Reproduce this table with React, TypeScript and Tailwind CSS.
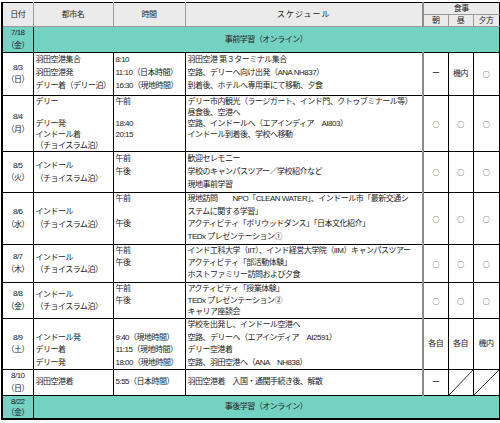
import React from 'react';

type Row = {
  date: string[];
  h: string;
  lh: string;
  city: string[];
  cityCenter?: boolean;
  time: string[];
  timeCenter?: boolean;
  sched: string[];
  schedCenter?: boolean;
  meals: string[];
};

const rows: Row[] = [
  {
    date: ['8/3', '（日）'], h: 'h-[43px]', lh: 'h-[13px] leading-[13px]',
    city: ['羽田空港集合', '羽田空港発', 'デリー着（デリー泊）'],
    time: ['8:10', '11:10（日本時間）', '16:30（現地時間）'],
    sched: ['羽田空港 第３ターミナル集合', '空路、デリーへ向け出発（ANA NH837）', '到着後、ホテルへ専用車にて移動、夕食'],
    meals: ['ー', '機内', '○'],
  },
  {
    date: ['8/4', '（月）'], h: 'h-[55px]', lh: 'h-[11px] leading-[11px]',
    city: ['デリー', '', 'デリー発', 'インドール着', '（チョイスラム泊）'],
    time: ['午前', '', '18:40', '20:15'],
    sched: ['デリー市内観光（ラージガート、インド門、クトゥブミナール等）', '昼食後、空港へ', '空路、インドールへ（エアインディア　AI803）', 'インドール到着後、学校へ移動'],
    meals: ['○', '○', '○'],
  },
  {
    date: ['8/5', '（火）'], h: 'h-[41px]', lh: 'h-[13px] leading-[13px]',
    city: ['インドール', '（チョイスラム泊）'], cityCenter: true,
    time: ['午前', '午後'],
    sched: ['歓迎セレモニー', '学校のキャンパスツアー／学校紹介など', '現地事前学習'],
    meals: ['○', '○', '○'],
  },
  {
    date: ['8/6', '（水）'], h: 'h-[52px]', lh: 'h-[12.5px] leading-[12.5px]',
    city: ['インドール', '（チョイスラム泊）'], cityCenter: true,
    time: ['午前', '', '午後'],
    sched: ['現地訪問　　NPO「CLEAN WATER」、インドール市「最新交通シ', 'ステムに関する学習」', 'アクティビティ「ボリウッドダンス」「日本文化紹介」', 'TEDx プレゼンテーション①'],
    meals: ['○', '○', '○'],
  },
  {
    date: ['8/7', '（木）'], h: 'h-[38px]', lh: 'h-[12px] leading-[12px]',
    city: ['インドール', '（チョイスラム泊）'], cityCenter: true,
    time: ['午前', '午後'],
    sched: ['インド工科大学（IIT）、インド経営大学院（IIM）キャンパスツアー', 'アクティビティ「部活動体験」', 'ホストファミリー訪問および夕食'],
    meals: ['○', '○', '○'],
  },
  {
    date: ['8/8', '（金）'], h: 'h-[36px]', lh: 'h-[11.5px] leading-[11.5px]',
    city: ['インドール', '（チョイスラム泊）'], cityCenter: true,
    time: ['午前', '午後'],
    sched: ['アクティビティ「授業体験」', 'TEDx プレゼンテーション②', 'キャリア座談会'],
    meals: ['○', '○', '○'],
  },
  {
    date: ['8/9', '（土）'], h: 'h-[51px]', lh: 'h-[12.5px] leading-[12.5px]',
    city: ['', 'インドール発', 'デリー着', 'デリー発'],
    time: ['', '9:40（現地時間）', '11:15（現地時間）', '18:00（現地時間）'],
    sched: ['学校を出発し、インドール空港へ', '空路、デリーへ（エアインディア　AI2591）', 'デリー空港着', '空路、羽田空港へ（ANA　NH838）'],
    meals: ['各自', '各自', '機内'],
  },
  {
    date: ['8/10', '（日）'], h: 'h-[26px]', lh: 'h-[12.5px] leading-[12.5px]',
    city: ['羽田空港着'], cityCenter: true,
    time: ['5:55（日本時間）'], timeCenter: true,
    sched: ['羽田空港着　入国・通関手続き後、解散'], schedCenter: true,
    meals: ['ー', '/', '/'],
  },
];

const Lines = ({ lines, lh }: { lines: string[]; lh: string }) => (
  <div className="flex flex-col">
    {lines.map((l, i) => (
      <div key={i} className={`${lh} whitespace-nowrap overflow-visible`}>{l || '\u00a0'}</div>
    ))}
  </div>
);

const Diag = () => (
  <svg className="absolute inset-0 w-full h-full" preserveAspectRatio="none" viewBox="0 0 10 10">
    <line x1="0" y1="10" x2="10" y2="0" stroke="#000" strokeWidth="0.8" vectorEffect="non-scaling-stroke" />
  </svg>
);

const Meal = ({ m }: { m: string }) => {
  if (m === '/') return <Diag />;
  if (m === '○') return <div className="h-[10px] leading-[10px] font-['Noto_Sans_CJK_JP',sans-serif] text-[7px]">○</div>;
  return <div className="h-[10px] leading-[10px]">{m}</div>;
};

const App: React.FC = () => {
  const body = 'border border-black';
  const head = 'border border-[#9a9a9a] text-center';
  return (
    <div className="w-[500px] h-[423px] bg-white overflow-hidden pt-[2px] pl-[1px] font-['Liberation_Sans','Noto_Sans_CJK_JP',sans-serif] text-[8px] tracking-[-0.5px] text-[#222]">
      <table className="table-fixed border-collapse w-[497px] border border-black border-l-2 border-b-2">
        <colgroup>
          <col className="w-[31px]" />
          <col className="w-[80px]" />
          <col className="w-[72px]" />
          <col className="w-[238px]" />
          <col className="w-[25px]" />
          <col className="w-[25px]" />
          <col className="w-[26px]" />
        </colgroup>
        <tbody>
          {/* ヘッダー */}
          <tr className="h-[12px] bg-[#ebebeb]">
            <td rowSpan={2} className={`${head} border-t-black border-l-black`}><div className="h-[11px] leading-[11px]">日付</div></td>
            <td rowSpan={2} className={`${head} border-t-black`}><div className="h-[11px] leading-[11px]">都市名</div></td>
            <td rowSpan={2} className={`${head} border-t-black`}><div className="h-[11px] leading-[11px]">時間</div></td>
            <td rowSpan={2} className={`${head} border-t-black tracking-[1px]`}><div className="h-[11px] leading-[11px]">スケジュール</div></td>
            <td colSpan={3} className={`${head} border-t-black border-r-black border-l-2 border-l-[#8a8a8a]`}><div className="h-[11px] leading-[11px]">食事</div></td>
          </tr>
          <tr className="h-[12px] bg-[#ebebeb]">
            <td className={`${head} border-l-2 border-l-[#8a8a8a]`}><div className="h-[11px] leading-[11px]">朝</div></td>
            <td className={head}><div className="h-[11px] leading-[11px]">昼</div></td>
            <td className={`${head} border-r-black`}><div className="h-[11px] leading-[11px]">夕方</div></td>
          </tr>

          {/* 事前学習 */}
          <tr className="h-[26px] bg-[#74d2c3]">
            <td className="border border-black text-center align-middle">
              <Lines lines={['7/18', '（金）']} lh="h-[12.5px] leading-[12.5px]" />
            </td>
            <td colSpan={6} className="border border-black text-center align-middle">
              <div className="h-[12px] leading-[12px]">事前学習（オンライン）</div>
            </td>
          </tr>

          {rows.map((r, i) => (
            <tr key={i} className={r.h}>
              <td className={`${body} text-center align-middle`}>
                <Lines lines={r.date} lh="h-[12.5px] leading-[12.5px]" />
              </td>
              <td className={`${body} pl-[2px] ${r.cityCenter ? 'align-middle' : 'align-top'}`}>
                <Lines lines={r.city} lh={r.lh} />
              </td>
              <td className={`${body} pl-[2px] ${r.timeCenter ? 'align-middle' : 'align-top'}`}>
                <Lines lines={r.time} lh={r.lh} />
              </td>
              <td className={`${body} pl-[2px] ${r.schedCenter ? 'align-middle' : 'align-top'}`}>
                <Lines lines={r.sched} lh={r.lh} />
              </td>
              {r.meals.map((m, j) => (
                <td
                  key={j}
                  className={`${body} relative text-center align-middle ${j === 0 ? 'border-l-2 border-l-[#8a8a8a]' : ''}`}
                >
                  <Meal m={m} />
                </td>
              ))}
            </tr>
          ))}

          {/* 事後学習 */}
          <tr className="h-[23px] bg-[#74d2c3]">
            <td className="border border-black text-center align-middle">
              <Lines lines={['8/22', '（金）']} lh="h-[11px] leading-[11px]" />
            </td>
            <td colSpan={6} className="border border-black text-center align-middle">
              <div className="h-[12px] leading-[12px]">事後学習（オンライン）</div>
            </td>
          </tr>
        </tbody>
      </table>
    </div>
  );
};

export default App;
